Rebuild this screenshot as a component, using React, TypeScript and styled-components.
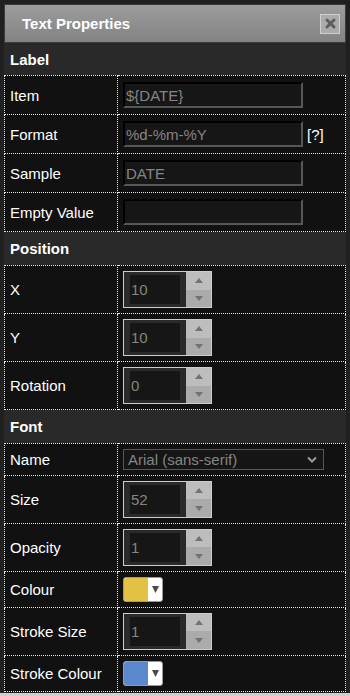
import styled, { createGlobalStyle } from "styled-components";

const GlobalStyle = createGlobalStyle`
  html, body {
    margin: 0;
    padding: 0;
    background: #cfcfcf;
    font-family: "Liberation Sans", Arial, sans-serif;
  }
`;

const Dialog = styled.div`
  width: 350px;
  height: 693px;
  box-sizing: border-box;
  padding: 4px 4px 1px;
  background: #202020;
  display: flex;
  flex-direction: column;
  overflow: hidden;
`;

const TitleBar = styled.div`
  height: 39px;
  box-sizing: border-box;
  border: 1px solid #3c3c3c;
  background: linear-gradient(#9c9c9c, #838383);
  display: flex;
  align-items: center;
  justify-content: space-between;
  padding: 0 5px 0 17px;
`;

const Title = styled.span`
  color: #fff;
  font-size: 15px;
  font-weight: bold;
`;

const CloseButton = styled.button`
  width: 20px;
  height: 20px;
  padding: 0;
  margin-top: 1px;
  border: 1px solid #cfcfcf;
  background: #ababab;
  display: flex;
  align-items: center;
  justify-content: center;
  cursor: pointer;
`;

const SectionHeader = styled.div`
  height: 33px;
  display: flex;
  align-items: center;
  padding-left: 6px;
  background: #292929;
  color: #fff;
  font-size: 15px;
  font-weight: bold;
`;

const Table = styled.table`
  width: 100%;
  border-collapse: collapse;
  background: #111;
`;

const LabelCell = styled.td`
  width: 107px;
  border: 1px dotted #e6e6e6;
  padding: 0 0 0 5px;
  color: #fff;
  font-size: 15px;
  white-space: nowrap;
`;

const ValueCell = styled.td<{ $pad: number }>`
  border: 1px dotted #e6e6e6;
  padding: ${(p) => p.$pad}px 5px;
  line-height: 0;
`;

const ValueRow = styled.div`
  display: flex;
  align-items: center;
  gap: 4px;
  line-height: normal;
`;

const TextInput = styled.input`
  width: 180px;
  height: 26px;
  box-sizing: border-box;
  border-style: solid;
  border-width: 2px;
  border-color: #000 #575757 #575757 #000;
  background: #161616;
  color: #858585;
  font-family: "Liberation Sans", Arial, sans-serif;
  font-size: 15px;
  padding: 0 1px;
  outline: none;
`;

const Help = styled.span`
  color: #fff;
  font-size: 15px;
`;

const Spinner = styled.div`
  width: 89px;
  height: 37px;
  box-sizing: border-box;
  border: 1px solid #cdcdcd;
  background: #2a2a2a;
  display: flex;
  line-height: normal;
`;

const SpinField = styled.input`
  width: 50px;
  height: 29px;
  margin: 3px 6px 0 6px;
  box-sizing: border-box;
  border: none;
  background: #161616;
  color: #858585;
  font-family: "Liberation Sans", Arial, sans-serif;
  font-size: 15px;
  padding: 0 1px;
  outline: none;
`;

const SpinButtons = styled.div`
  flex: 1;
  display: flex;
  flex-direction: column;
`;

const SpinButton = styled.div<{ $up?: boolean }>`
  flex: 1;
  display: flex;
  align-items: center;
  justify-content: center;
  background: ${(p) => (p.$up ? "#bdbdbd" : "#ababab")};
`;

const Select = styled.div`
  width: 201px;
  height: 21px;
  box-sizing: border-box;
  border: 1px solid #575757;
  background: #151515;
  color: #858585;
  font-size: 15px;
  display: flex;
  align-items: center;
  justify-content: space-between;
  padding: 0 6px 0 4px;
  line-height: normal;
`;

const ColourButton = styled.div<{ $colour: string }>`
  width: 40px;
  height: 25px;
  box-sizing: border-box;
  border: 1px solid #9a9a9a;
  border-radius: 3px;
  overflow: hidden;
  display: flex;
  background: #fff;
  &::before {
    content: "";
    width: 24px;
    background: ${(p) => p.$colour};
  }
`;

const ColourArrow = styled.div`
  flex: 1;
  display: flex;
  align-items: center;
  justify-content: center;
`;

const Tri = ({ down }: { down?: boolean }) => (
  <svg width="8" height="5" viewBox="0 0 8 5">
    <polygon points={down ? "0,0 8,0 4,5" : "0,5 8,5 4,0"} fill="#727272" />
  </svg>
);

const NumberSpinner = ({ value }: { value: string }) => (
  <Spinner>
    <SpinField defaultValue={value} />
    <SpinButtons>
      <SpinButton $up>
        <Tri />
      </SpinButton>
      <SpinButton>
        <Tri down />
      </SpinButton>
    </SpinButtons>
  </Spinner>
);

const Colour = ({ colour }: { colour: string }) => (
  <ColourButton $colour={colour}>
    <ColourArrow>
      <svg width="7" height="7" viewBox="0 0 7 7">
        <polygon points="0,0 7,0 3.5,7" fill="#4a4a4a" />
      </svg>
    </ColourArrow>
  </ColourButton>
);

type Row = { label: string; pad: number; control: React.ReactNode };

const Section = ({ title, rows }: { title: string; rows: Row[] }) => (
  <>
    <SectionHeader>{title}</SectionHeader>
    <Table>
      <tbody>
        {rows.map((r) => (
          <tr key={r.label}>
            <LabelCell>{r.label}</LabelCell>
            <ValueCell $pad={r.pad}>
              <ValueRow>{r.control}</ValueRow>
            </ValueCell>
          </tr>
        ))}
      </tbody>
    </Table>
  </>
);

export default function App() {
  return (
    <>
      <GlobalStyle />
      <Dialog>
        <TitleBar>
          <Title>Text Properties</Title>
          <CloseButton aria-label="close">
            <svg width="11" height="11" viewBox="0 0 11 11">
              <path
                d="M2 2 L9 9 M9 2 L2 9"
                stroke="#5e5e5e"
                strokeWidth="3"
                strokeLinecap="round"
              />
            </svg>
          </CloseButton>
        </TitleBar>
        <Section
          title="Label"
          rows={[
            { label: "Item", pad: 6, control: <TextInput defaultValue="${DATE}" /> },
            {
              label: "Format",
              pad: 6,
              control: (
                <>
                  <TextInput defaultValue="%d-%m-%Y" />
                  <Help>[?]</Help>
                </>
              ),
            },
            { label: "Sample", pad: 6, control: <TextInput defaultValue="DATE" /> },
            { label: "Empty Value", pad: 6, control: <TextInput defaultValue="" /> },
          ]}
        />
        <Section
          title="Position"
          rows={[
            { label: "X", pad: 5, control: <NumberSpinner value="10" /> },
            { label: "Y", pad: 5, control: <NumberSpinner value="10" /> },
            { label: "Rotation", pad: 5, control: <NumberSpinner value="0" /> },
          ]}
        />
        <Section
          title="Font"
          rows={[
            {
              label: "Name",
              pad: 5,
              control: (
                <Select>
                  <span>Arial (sans-serif)</span>
                  <svg width="10" height="7" viewBox="0 0 10 7">
                    <polyline
                      points="1,1.5 5,5.5 9,1.5"
                      fill="none"
                      stroke="#9a9a9a"
                      strokeWidth="2"
                    />
                  </svg>
                </Select>
              ),
            },
            { label: "Size", pad: 5, control: <NumberSpinner value="52" /> },
            { label: "Opacity", pad: 5, control: <NumberSpinner value="1" /> },
            { label: "Colour", pad: 5, control: <Colour colour="#e1c244" /> },
            { label: "Stroke Size", pad: 5, control: <NumberSpinner value="1" /> },
            { label: "Stroke Colour", pad: 5, control: <Colour colour="#5b88cd" /> },
          ]}
        />
      </Dialog>
    </>
  );
}
